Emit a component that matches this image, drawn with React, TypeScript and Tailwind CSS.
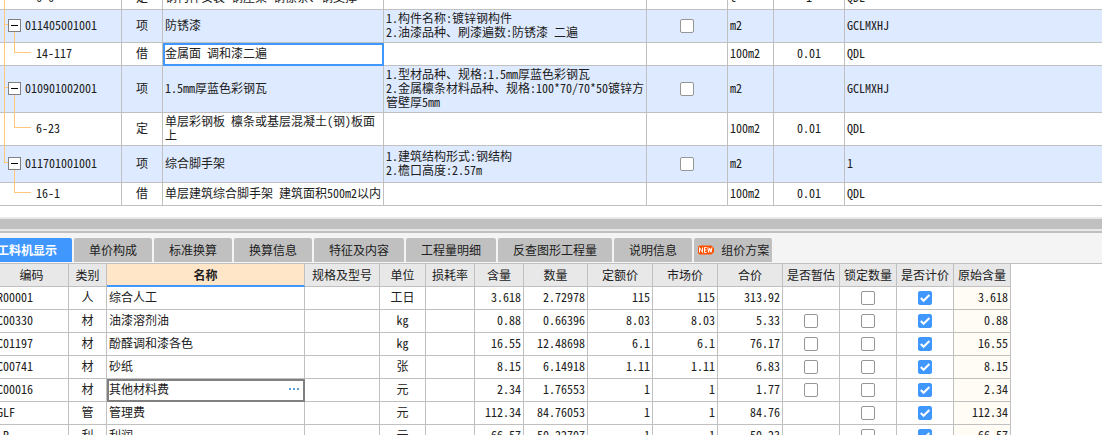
import type { ReactNode } from "react";
import clsx from "clsx";

type TopRow = {
  code: string;
  kind: string;
  name: string;
  feature?: string[];
  unit: string;
  qty?: string;
  expr: string;
  parent?: boolean;
  last?: boolean;
  selected?: boolean;
  height: string;
};

const topRows: TopRow[] = [
  { code: "6-6", kind: "定", name: "钢构件安装 钢屋架 钢檩条、钢支撑", unit: "t", qty: "1", expr: "QDL", height: "h-[23px]" },
  { code: "011405001001", kind: "项", name: "防锈漆", feature: ["1.构件名称:镀锌钢构件", "2.油漆品种、刷漆遍数:防锈漆 二遍"], unit: "m2", expr: "GCLMXHJ", parent: true, height: "h-[33px]" },
  { code: "14-117", kind: "借", name: "金属面 调和漆二遍", unit: "100m2", qty: "0.01", expr: "QDL", selected: true, height: "h-[23px]" },
  { code: "010901002001", kind: "项", name: "1.5mm厚蓝色彩钢瓦", feature: ["1.型材品种、规格:1.5mm厚蓝色彩钢瓦", "2.金属檩条材料品种、规格:100*70/70*50镀锌方管壁厚5mm"], unit: "m2", expr: "GCLMXHJ", parent: true, height: "h-[47px]" },
  { code: "6-23", kind: "定", name: "单层彩钢板 檩条或基层混凝土(钢)板面上", unit: "100m2", qty: "0.01", expr: "QDL", height: "h-[33px]" },
  { code: "011701001001", kind: "项", name: "综合脚手架", feature: ["1.建筑结构形式:钢结构", "2.檐口高度:2.57m"], unit: "m2", expr: "1", parent: true, last: true, height: "h-[37px]" },
  { code: "16-1", kind: "借", name: "单层建筑综合脚手架 建筑面积500m2以内", unit: "100m2", qty: "0.01", expr: "QDL", last: true, height: "h-[23px]" },
];

const tabs = ["工料机显示", "单价构成", "标准换算", "换算信息", "特征及内容", "工程量明细", "反查图形工程量", "说明信息"];

const headers = ["编码", "类别", "名称", "规格及型号", "单位", "损耗率", "含量", "数量", "定额价", "市场价", "合价", "是否暂估", "锁定数量", "是否计价", "原始含量"];

type Material = {
  code: string;
  kind: string;
  name: string;
  unit: string;
  nums: string[];
  estimate?: boolean;
  editing?: boolean;
};

const materials: Material[] = [
  { code: "R00001", kind: "人", name: "综合人工", unit: "工日", nums: ["3.618", "2.72978", "115", "115", "313.92"] },
  { code: "C00330", kind: "材", name: "油漆溶剂油", unit: "kg", nums: ["0.88", "0.66396", "8.03", "8.03", "5.33"], estimate: true },
  { code: "C01197", kind: "材", name: "酚醛调和漆各色", unit: "kg", nums: ["16.55", "12.48698", "6.1", "6.1", "76.17"], estimate: true },
  { code: "C00741", kind: "材", name: "砂纸", unit: "张", nums: ["8.15", "6.14918", "1.11", "1.11", "6.83"], estimate: true },
  { code: "C00016", kind: "材", name: "其他材料费", unit: "元", nums: ["2.34", "1.76553", "1", "1", "1.77"], estimate: true, editing: true },
  { code: "GLF", kind: "管", name: "管理费", unit: "元", nums: ["112.34", "84.76053", "1", "1", "84.76"] },
  { code: "LR", kind: "利", name: "利润", unit: "元", nums: ["66.57", "50.22707", "1", "1", "50.23"] },
];

function Check({ label, checked = false }: { label: string; checked?: boolean }) {
  return (
    <label className="relative mx-auto block size-[14px]">
      <input
        type="checkbox"
        aria-label={label}
        defaultChecked={checked}
        className="peer block size-[14px] appearance-none rounded-[2px] border border-[#969696] bg-white checked:border-[#4098ff] checked:bg-[#4098ff]"
      />
      <svg viewBox="0 0 14 14" className="pointer-events-none absolute inset-0 hidden size-[14px] peer-checked:block" aria-hidden="true">
        <path d="M2.8 7 5.6 9.8 11.4 4" fill="none" stroke="white" strokeWidth="2" />
      </svg>
    </label>
  );
}

function Cell({ children, className }: { children?: ReactNode; className?: string }) {
  return <td className={clsx("border-r border-b border-[#c0c0c0] px-[2px] pt-0 pb-[2px]", className)}>{children}</td>;
}

function CheckCell({ children }: { children?: ReactNode }) {
  return <td className="border-r border-b border-[#c0c0c0] p-0">{children}</td>;
}

/* Vertical lines run past the cell so that they join the next row's lines. */
function TreeLines({ parent, last }: { parent?: boolean; last?: boolean }) {
  return (
    <svg className="pointer-events-none absolute -top-[2px] left-0 h-full w-8 overflow-visible" stroke="#ffc87a" shapeRendering="crispEdges" aria-hidden="true">
      {!(last && !parent) && <line x1="4.5" x2="4.5" y1="0" y2={last ? "50%" : "112%"} />}
      {parent ? (
        <>
          <line x1="4" x2="8" y1="50%" y2="50%" />
          <line x1="14.5" x2="14.5" y1="50%" y2="112%" />
        </>
      ) : (
        <>
          <line x1="14.5" x2="14.5" y1="0" y2="50%" />
          <line x1="14" x2="31" y1="50%" y2="50%" />
        </>
      )}
    </svg>
  );
}

function BillTable() {
  return (
    <table className="-mt-[13px] w-full table-fixed border-separate border-spacing-0">
      <colgroup>
        <col className="w-[122px]" />
        <col className="w-[41px]" />
        <col className="w-[221px]" />
        <col className="w-[263px]" />
        <col className="w-[81px]" />
        <col className="w-[46px]" />
        <col className="w-[71px]" />
        <col />
      </colgroup>
      <tbody>
        {topRows.map((r) => (
          <tr key={r.code} className={clsx(r.height, r.parent ? "bg-[#deeaff]" : "bg-white")}>
            <Cell className="relative">
              <TreeLines parent={r.parent} last={r.last} />
              {r.parent ? (
                <div className="relative flex items-center gap-1 pl-[6px]">
                  <button type="button" aria-label={"折叠 " + r.code} className="flex size-[13px] items-center justify-center border border-[#808080] bg-white">
                    <span className="h-px w-[7px] bg-black" />
                  </button>
                  <span>{r.code}</span>
                </div>
              ) : (
                <div className="pl-[34px]">{r.code}</div>
              )}
            </Cell>
            <Cell className="text-center">{r.kind}</Cell>
            <Cell className={r.selected ? "outline-2 -outline-offset-2 outline-[#4098ff]" : ""}>{r.name}</Cell>
            <Cell>
              {r.feature?.map((f) => (
                <div key={f} className="break-all">{f}</div>
              ))}
            </Cell>
            <CheckCell>{r.parent && <Check label={"选择 " + r.code} />}</CheckCell>
            <Cell>{r.unit}</Cell>
            <Cell className="text-center">{r.qty}</Cell>
            <td className="border-b border-[#c0c0c0] px-[2px] pt-0 pb-[2px]">{r.expr}</td>
          </tr>
        ))}
      </tbody>
    </table>
  );
}

function NewBadge() {
  return (
    <svg viewBox="0 0 16 10" className="h-[10px] w-4" aria-hidden="true">
      <path d="M1.5 0.5H13.5L16 3V7L13.5 9.5H1.5L0 8V2Z" fill="#ff5000" />
      <g fill="none" stroke="white" strokeWidth="1">
        <path d="M1.5 7.5V2.5L4.5 7.5V2.5" />
        <path d="M8.5 2.5H6.5V7.5H8.5M6.5 5H8.5" />
        <path d="M9.8 2.3L10.6 7.3L11.8 3.2L13 7.3L14 2.3" />
      </g>
    </svg>
  );
}

function TabBar() {
  return (
    <div role="tablist" className="-ml-[18px] flex gap-[2px] pt-[5px] text-xs">
      {tabs.map((t, i) => (
        <button
          key={t}
          type="button"
          role="tab"
          aria-selected={i === 0}
          className={clsx("h-6 shrink-0 rounded-t-[2px] px-[15px]", i === 0 ? "bg-[#4098ff] font-bold text-white" : "bg-[#c0c0c0]")}
        >
          {t}
        </button>
      ))}
      <button type="button" role="tab" aria-selected={false} className="flex h-6 shrink-0 items-center gap-[7px] rounded-t-[2px] bg-[#c0c0c0] pr-[3px] pl-1">
        <NewBadge />
        组价方案
      </button>
    </div>
  );
}

function MaterialTable() {
  return (
    <table className="-ml-[5px] w-[1016px] table-fixed border-separate border-spacing-0">
      <colgroup>
        <col className="w-[74px]" />
        <col className="w-[38px]" />
        <col className="w-[198px]" />
        <col className="w-[75px]" />
        <col className="w-[46px]" />
        <col className="w-[49px]" />
        <col className="w-[49px]" />
        <col className="w-[64px]" />
        <col className="w-[65px]" />
        <col className="w-[65px]" />
        <col className="w-[65px]" />
        <col className="w-[57px]" />
        <col className="w-[57px]" />
        <col className="w-[57px]" />
        <col className="w-[57px]" />
      </colgroup>
      <thead>
        <tr className="h-[23px]">
          {headers.map((h) => (
            <th
              key={h}
              scope="col"
              className={clsx(
                "border-r border-[#c0c0c0] p-0 text-center whitespace-nowrap",
                h === "名称" ? "border-b-2 border-b-[#4098ff] bg-[#ffe6c8] font-bold" : "border-b bg-[#e8e8e8] font-normal",
              )}
            >
              {h}
            </th>
          ))}
        </tr>
      </thead>
      <tbody>
        {materials.map((m) => (
          <tr key={m.code} className="h-[23px]">
            <Cell>{m.code}</Cell>
            <Cell className="text-center">{m.kind}</Cell>
            <Cell className={m.editing ? "outline-2 -outline-offset-2 outline-[#808080]" : ""}>
              <div className="flex items-center justify-between">
                <span>{m.name}</span>
                {m.editing && (
                  <button type="button" aria-label="更多" className="flex gap-[2px] pr-[3px]">
                    <span className="size-[2px] bg-[#5a9fd4]" />
                    <span className="size-[2px] bg-[#5a9fd4]" />
                    <span className="size-[2px] bg-[#5a9fd4]" />
                  </button>
                )}
              </div>
            </Cell>
            <Cell />
            <Cell className="text-center">{m.unit}</Cell>
            <Cell />
            {m.nums.map((n, i) => (
              <Cell key={i} className="text-right">{n}</Cell>
            ))}
            <CheckCell>{m.estimate && <Check label={"是否暂估 " + m.name} />}</CheckCell>
            <CheckCell><Check label={"锁定数量 " + m.name} /></CheckCell>
            <CheckCell><Check label={"是否计价 " + m.name} checked /></CheckCell>
            <Cell className="bg-[#fffcf6] text-right">{m.nums[0]}</Cell>
          </tr>
        ))}
      </tbody>
    </table>
  );
}

export default function App() {
  return (
    <div className="flex h-screen flex-col overflow-hidden bg-white font-['Noto_Sans_Mono_CJK_SC','Noto_Sans_CJK_SC',sans-serif] text-xs leading-[14px] text-[#202020]">
      <section className="shrink-0 pb-[11px]">
        <BillTable />
      </section>
      <div role="separator" className="h-[14px] shrink-0 border-t-2 border-b-2 border-[#e8e8e8] bg-[#c0c0c0]" />
      <section className="shrink-0">
        <div className="border-t-2 border-b border-[#c0c0c0] bg-[#f4f4f4] pb-px">
          <TabBar />
        </div>
        <MaterialTable />
      </section>
    </div>
  );
}
